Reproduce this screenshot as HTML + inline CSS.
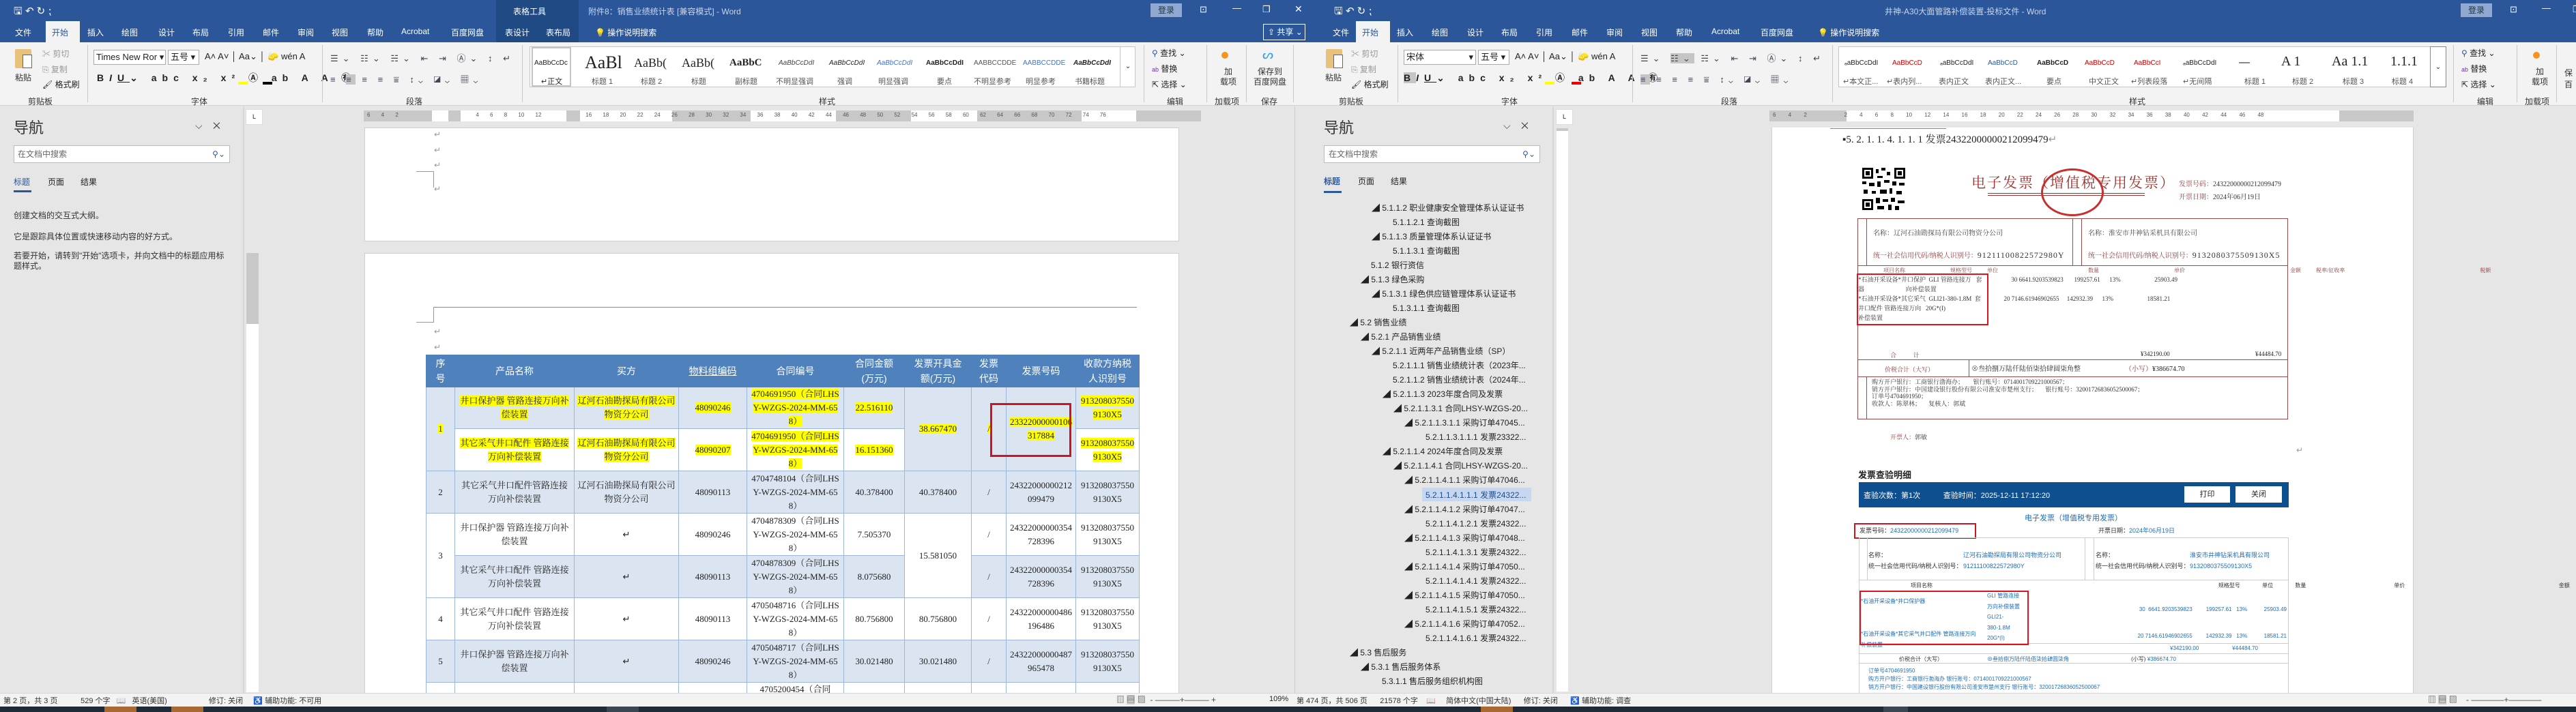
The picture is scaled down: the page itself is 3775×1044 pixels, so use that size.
<!DOCTYPE html>
<html><head><meta charset="utf-8">
<style>
*{margin:0;padding:0;box-sizing:border-box}
body{width:3775px;height:1044px;overflow:hidden;position:relative;background:#e6e6e6;font-family:"Liberation Sans","Noto Sans CJK SC",sans-serif;font-size:12px;color:#222}
.a{position:absolute;white-space:nowrap}
.tb{background:#2b579a}
.w{color:#fff}
.rib{background:#f3f3f3}
.sep{position:absolute;width:1px;background:#c8c8c8}
.gl{font-size:12px;color:#333}
.sty{position:absolute;top:68px;height:60px;width:880px;background:#fff;border:1px solid #c6c6c6}
.sty span{position:absolute;white-space:nowrap}
.nav{font-size:12px;color:#333}
table.t{position:absolute;border-collapse:collapse;table-layout:fixed;font-family:"Liberation Serif","Noto Serif CJK SC",serif;font-size:13px;line-height:20px}
table.t td{border:1px solid #9db7dc;text-align:center;vertical-align:middle;padding:0 4px;overflow:hidden;word-break:break-all}
table.t tr.h td{background:#4f81bd;color:#fff;font-family:"Liberation Sans","Noto Sans CJK SC",sans-serif;font-size:14px;line-height:22px;border-color:#4f81bd}
.b{background:#dbe5f1}
.y{background:#ffff00}
.tree div{position:absolute;white-space:nowrap;font-size:12px;color:#222}
</style></head><body>

<!-- TITLE BAR -->
<div class="a tb" style="left:0;top:0;width:3775px;height:62px"></div>
<div class="a" style="left:727px;top:0;width:121px;height:62px;background:#1f4a84"></div>
<div class="a w" style="left:20px;top:6px;font-size:15px">🖫 ↶ ↻ ⁏</div>
<div class="a w" style="left:752px;top:8px;font-size:12px">表格工具</div>
<div class="a" style="left:862px;top:8px;font-size:12px;color:#c8d4ea">附件8：销售业绩统计表 [兼容模式] - Word</div>
<div class="a" style="left:1686px;top:5px;width:46px;height:20px;background:#8fa9d0;color:#234;font-size:12px;text-align:center;line-height:20px">登录</div>
<div class="a w" style="left:1758px;top:6px;font-size:13px">⊡</div>
<div class="a w" style="left:1806px;top:4px;font-size:13px">—</div>
<div class="a w" style="left:1850px;top:6px;font-size:13px">❐</div>
<div class="a w" style="left:1897px;top:5px;font-size:14px">✕</div>
<div class="a" style="left:67px;top:31px;width:50px;height:31px;background:#f3f3f3"></div>
<div class="a w" style="left:22px;top:39px;font-size:12px">文件</div>
<div class="a" style="left:76px;top:39px;font-size:12px;color:#2b579a">开始</div>
<div class="a w" style="top:39px;left:128px;font-size:12px">插入</div>
<div class="a w" style="top:39px;left:178px;font-size:12px">绘图</div>
<div class="a w" style="top:39px;left:232px;font-size:12px">设计</div>
<div class="a w" style="top:39px;left:282px;font-size:12px">布局</div>
<div class="a w" style="top:39px;left:334px;font-size:12px">引用</div>
<div class="a w" style="top:39px;left:385px;font-size:12px">邮件</div>
<div class="a w" style="top:39px;left:436px;font-size:12px">审阅</div>
<div class="a w" style="top:39px;left:486px;font-size:12px">视图</div>
<div class="a w" style="top:39px;left:538px;font-size:12px">帮助</div>
<div class="a w" style="top:39px;left:588px;font-size:12px">Acrobat</div>
<div class="a w" style="top:39px;left:661px;font-size:12px">百度网盘</div>
<div class="a w" style="top:39px;left:740px;font-size:12px">表设计</div>
<div class="a w" style="top:39px;left:800px;font-size:12px">表布局</div>
<div class="a w" style="top:39px;left:872px;font-size:12px">💡 操作说明搜索</div>
<div class="a w" style="left:1851px;top:35px;width:62px;height:24px;border:1px solid #fff;font-size:12px;line-height:22px;padding-left:6px">⇪ 共享 ⌄</div>
<div class="a w" style="left:1955px;top:6px;font-size:15px">🖫 ↶ ↻ ⁏</div>
<div class="a" style="left:2762px;top:8px;font-size:12px;color:#c8d4ea">井神-A30大面管路补偿装置-投标文件 - Word</div>
<div class="a" style="left:3606px;top:5px;width:46px;height:20px;background:#8fa9d0;color:#234;font-size:12px;text-align:center;line-height:20px">登录</div>
<div class="a w" style="left:3678px;top:6px;font-size:13px">⊡</div>
<div class="a w" style="left:3725px;top:4px;font-size:13px">—</div>
<div class="a w" style="left:3770px;top:6px;font-size:13px">❐</div>
<div class="a" style="left:1987px;top:31px;width:50px;height:31px;background:#f3f3f3"></div>
<div class="a w" style="top:39px;left:1953px;font-size:12px">文件</div>
<div class="a" style="top:39px;left:1996px;font-size:12px;color:#2b579a">开始</div>
<div class="a w" style="top:39px;left:2047px;font-size:12px">插入</div>
<div class="a w" style="top:39px;left:2098px;font-size:12px">绘图</div>
<div class="a w" style="top:39px;left:2150px;font-size:12px">设计</div>
<div class="a w" style="top:39px;left:2200px;font-size:12px">布局</div>
<div class="a w" style="top:39px;left:2251px;font-size:12px">引用</div>
<div class="a w" style="top:39px;left:2303px;font-size:12px">邮件</div>
<div class="a w" style="top:39px;left:2354px;font-size:12px">审阅</div>
<div class="a w" style="top:39px;left:2405px;font-size:12px">视图</div>
<div class="a w" style="top:39px;left:2456px;font-size:12px">帮助</div>
<div class="a w" style="top:39px;left:2508px;font-size:12px">Acrobat</div>
<div class="a w" style="top:39px;left:2580px;font-size:12px">百度网盘</div>
<div class="a w" style="top:39px;left:2664px;font-size:12px">💡 操作说明搜索</div>

<!-- RIBBON LEFT -->
<div class="a rib" style="left:0;top:62px;width:3775px;height:93px;border-bottom:1px solid #d4d4d4"></div>
<div class="a" style="left:22px;top:72px;width:24px;height:28px;background:#e8c27a;border-radius:2px"></div>
<div class="a" style="left:33px;top:80px;width:14px;height:20px;background:#fff;border:1px solid #666"></div>
<div class="a gl" style="left:22px;top:105px">粘贴</div>
<div class="a" style="left:62px;top:70px;color:#999">✂ 剪切</div>
<div class="a" style="left:62px;top:93px;color:#999">⎘ 复制</div>
<div class="a" style="left:62px;top:115px">🖌 格式刷</div>
<div class="a gl" style="left:41px;top:140px">剪贴板</div>
<div class="sep" style="left:128px;top:66px;height:84px"></div>
<div class="a" style="left:137px;top:73px;width:106px;height:22px;background:#fff;border:1px solid #aaa;font-size:13px;line-height:20px;padding-left:3px">Times New Ror ▾</div>
<div class="a" style="left:246px;top:73px;width:46px;height:22px;background:#fff;border:1px solid #aaa;font-size:13px;line-height:20px;padding-left:3px">五号 ▾</div>
<div class="a" style="left:300px;top:75px;font-size:13px">A˄ A˅ │ Aa⌄ │ 🧽 wén A</div>
<div class="a" style="left:142px;top:104px;font-size:14px;font-weight:bold;letter-spacing:8px">B<i>I</i><u>U</u>⌄ abc x₂ x²  Ⓐ ab A A ㊒</div>
<div class="a" style="left:349px;top:120px;width:14px;height:4px;background:#ff0"></div>
<div class="a" style="left:385px;top:120px;width:14px;height:4px;background:#000"></div>
<div class="a gl" style="left:280px;top:140px">字体</div>
<div class="sep" style="left:472px;top:66px;height:84px"></div>
<div class="a" style="left:484px;top:75px;font-size:13px;color:#445;letter-spacing:6px">☰⌄ ☷⌄ ☵⌄ ⇤ ⇥ Ⓐ⌄ ↕ ↵</div>
<div class="a" style="left:484px;top:106px;font-size:13px;color:#445;letter-spacing:6px">≡ <span style="background:#c5c5c5">≡</span> ≡ ≡ ⩸ ↕⌄ ◪⌄ ▦⌄</div>
<div class="a gl" style="left:595px;top:140px">段落</div>
<div class="sep" style="left:765px;top:66px;height:84px"></div>
<div class="sty" style="left:776px;width:888px">
<span style="left:2px;top:0;width:58px;height:58px;border:2px solid #c5c5c5"></span>
<span style="left:6px;top:18px;font-size:10px">AaBbCcDc</span><span style="left:16px;top:42px;font-size:11px">↵正文</span>
<span style="left:80px;top:8px;font-size:26px;font-family:'Liberation Serif',serif">AaBl</span><span style="left:90px;top:42px;font-size:11px;color:#555">标题 1</span>
<span style="left:152px;top:13px;font-size:18px;font-family:'Liberation Serif',serif">AaBb(</span><span style="left:162px;top:42px;font-size:11px;color:#555">标题 2</span>
<span style="left:222px;top:13px;font-size:18px;font-family:'Liberation Serif',serif">AaBb(</span><span style="left:236px;top:42px;font-size:11px;color:#555">标题</span>
<span style="left:292px;top:15px;font-size:15px;font-weight:bold;font-family:'Liberation Serif',serif">AaBbC</span><span style="left:300px;top:42px;font-size:11px;color:#555">副标题</span>
<span style="left:364px;top:18px;font-size:10px;font-style:italic;color:#444">AaBbCcDdI</span><span style="left:360px;top:42px;font-size:11px;color:#555">不明显强调</span>
<span style="left:438px;top:18px;font-size:10px;font-style:italic">AaBbCcDdI</span><span style="left:450px;top:42px;font-size:11px;color:#555">强调</span>
<span style="left:508px;top:18px;font-size:10px;font-style:italic;color:#4472c4">AaBbCcDdI</span><span style="left:510px;top:42px;font-size:11px;color:#555">明显强调</span>
<span style="left:580px;top:18px;font-size:10px;font-weight:bold">AaBbCcDdI</span><span style="left:596px;top:42px;font-size:11px;color:#555">要点</span>
<span style="left:650px;top:18px;font-size:10px;color:#555">AABBCCDDE</span><span style="left:650px;top:42px;font-size:11px;color:#555">不明显参考</span>
<span style="left:722px;top:18px;font-size:10px;color:#4472c4">AABBCCDDE</span><span style="left:726px;top:42px;font-size:11px;color:#555">明显参考</span>
<span style="left:796px;top:18px;font-size:10px;font-style:italic;font-weight:bold">AaBbCcDdI</span><span style="left:798px;top:42px;font-size:11px;color:#555">书籍标题</span>
<span style="left:864px;top:-1px;width:23px;height:60px;border-left:1px solid #c6c6c6;font-size:10px;text-align:center;line-height:60px">⌄</span>
</div>
<div class="a gl" style="left:1200px;top:140px">样式</div>
<div class="sep" style="left:1676px;top:66px;height:84px"></div>
<div class="a" style="left:1688px;top:69px;font-size:12px"><span style="color:#2b579a">⚲</span> 查找 ⌄</div>
<div class="a" style="left:1688px;top:92px;font-size:12px"><span style="color:#7030a0;font-size:9px">ab</span> 替换</div>
<div class="a" style="left:1688px;top:115px;font-size:12px">⇱ 选择 ⌄</div>
<div class="a gl" style="left:1710px;top:140px">编辑</div>
<div class="sep" style="left:1768px;top:66px;height:84px"></div>
<div class="a" style="left:1790px;top:76px;width:10px;height:10px;border-radius:50%;background:#f7941d"></div>
<div class="a gl" style="left:1788px;top:98px;text-align:center;line-height:15px">加<br>载项</div>
<div class="a gl" style="left:1780px;top:140px">加载项</div>
<div class="sep" style="left:1826px;top:66px;height:84px"></div>
<div class="a" style="left:1850px;top:70px;font-size:18px;color:#2a9df4">ᔕ</div>
<div class="a gl" style="left:1837px;top:98px;text-align:center;line-height:15px">保存到<br>百度网盘</div>
<div class="a gl" style="left:1848px;top:140px">保存</div>
<div class="sep" style="left:1895px;top:66px;height:84px"></div>

<!-- RIBBON RIGHT -->
<div class="a" style="left:1943px;top:72px;width:24px;height:28px;background:#e8c27a;border-radius:2px"></div>
<div class="a" style="left:1954px;top:80px;width:14px;height:20px;background:#fff;border:1px solid #666"></div>
<div class="a gl" style="left:1942px;top:105px">粘贴</div>
<div class="a" style="left:1980px;top:70px;color:#999">✂ 剪切</div>
<div class="a" style="left:1980px;top:93px;color:#999">⎘ 复制</div>
<div class="a" style="left:1980px;top:115px">🖌 格式刷</div>
<div class="a gl" style="left:1962px;top:140px">剪贴板</div>
<div class="sep" style="left:2048px;top:66px;height:84px"></div>
<div class="a" style="left:2057px;top:73px;width:106px;height:22px;background:#fff;border:1px solid #aaa;font-size:13px;line-height:20px;padding-left:3px">宋体<span style="float:right;padding-right:3px">▾</span></div>
<div class="a" style="left:2166px;top:73px;width:46px;height:22px;background:#fff;border:1px solid #aaa;font-size:13px;line-height:20px;padding-left:3px">五号 ▾</div>
<div class="a" style="left:2220px;top:75px;font-size:13px">A˄ A˅ │ Aa⌄ │ 🧽 wén A</div>
<div class="a" style="left:2057px;top:104px;font-size:14px;font-weight:bold;letter-spacing:8px"><span style="background:#c5c5c5">B</span><i>I</i><u>U</u>⌄ abc x₂ x² Ⓐ ab A A ㊒</div>
<div class="a" style="left:2264px;top:120px;width:14px;height:4px;background:#ff0"></div>
<div class="a" style="left:2303px;top:120px;width:14px;height:4px;background:#e00"></div>
<div class="a gl" style="left:2200px;top:140px">字体</div>
<div class="sep" style="left:2392px;top:66px;height:84px"></div>
<div class="a" style="left:2404px;top:75px;font-size:13px;color:#445;letter-spacing:6px">☰⌄ <span style="background:#c5c5c5">☷⌄</span> ☵⌄ ⇤ ⇥ Ⓐ⌄ ↕ ↵</div>
<div class="a" style="left:2404px;top:106px;font-size:13px;color:#445;letter-spacing:6px"><span style="background:#c5c5c5">≡</span> ≡ ≡ ≡ ⩸ ↕⌄ ◪⌄ ▦⌄</div>
<div class="a gl" style="left:2522px;top:140px">段落</div>
<div class="sep" style="left:2685px;top:66px;height:84px"></div>
<div class="sty" style="left:2694px;width:891px">
<span style="left:8px;top:18px;font-size:10px">ₐaBbCcDdI</span><span style="left:6px;top:42px;font-size:11px;color:#555">↵本文正...</span>
<span style="left:78px;top:18px;font-size:10px;color:#c00">AaBbCcD</span><span style="left:70px;top:42px;font-size:11px;color:#555">↵表内列...</span>
<span style="left:148px;top:18px;font-size:10px">ₐaBbCcDdI</span><span style="left:146px;top:42px;font-size:11px;color:#555">表内正文</span>
<span style="left:218px;top:18px;font-size:10px;color:#2b579a">AaBbCcD</span><span style="left:214px;top:42px;font-size:11px;color:#555">表内正文...</span>
<span style="left:290px;top:18px;font-size:10px;font-weight:bold">AaBbCcD</span><span style="left:304px;top:42px;font-size:11px;color:#555">要点</span>
<span style="left:360px;top:18px;font-size:10px;color:#c00">AaBbCcD</span><span style="left:366px;top:42px;font-size:11px;color:#555">中文正文</span>
<span style="left:432px;top:18px;font-size:10px;color:#c00">AaBbCcI</span><span style="left:428px;top:42px;font-size:11px;color:#555">↵列表段落</span>
<span style="left:504px;top:18px;font-size:10px">ₐaBbCcDdI</span><span style="left:504px;top:42px;font-size:11px;color:#555">↵无间隔</span>
<span style="left:586px;top:14px;font-size:16px">—</span><span style="left:594px;top:42px;font-size:11px;color:#555">标题 1</span>
<span style="left:648px;top:10px;font-size:20px;font-family:'Liberation Serif',serif">A 1</span><span style="left:664px;top:42px;font-size:11px;color:#555">标题 2</span>
<span style="left:722px;top:10px;font-size:20px;font-family:'Liberation Serif',serif">Aa 1.1</span><span style="left:738px;top:42px;font-size:11px;color:#555">标题 3</span>
<span style="left:808px;top:10px;font-size:20px;font-family:'Liberation Serif',serif">1.1.1</span><span style="left:810px;top:42px;font-size:11px;color:#555">标题 4</span>
</div>
<div class="a" style="left:3561px;top:68px;width:24px;height:60px;border:1px solid #888;background:#fff;font-size:10px;text-align:center;line-height:60px">⌄</div>
<div class="a gl" style="left:3120px;top:140px">样式</div>
<div class="sep" style="left:3595px;top:66px;height:84px"></div>
<div class="a" style="left:3607px;top:69px;font-size:12px"><span style="color:#2b579a">⚲</span> 查找 ⌄</div>
<div class="a" style="left:3607px;top:92px;font-size:12px"><span style="color:#7030a0;font-size:9px">ab</span> 替换</div>
<div class="a" style="left:3607px;top:115px;font-size:12px">⇱ 选择 ⌄</div>
<div class="a gl" style="left:3630px;top:140px">编辑</div>
<div class="sep" style="left:3688px;top:66px;height:84px"></div>
<div class="a" style="left:3712px;top:76px;width:10px;height:10px;border-radius:50%;background:#f7941d"></div>
<div class="a gl" style="left:3710px;top:98px;text-align:center;line-height:15px">加<br>载项</div>
<div class="a gl" style="left:3700px;top:140px">加载项</div>
<div class="sep" style="left:3746px;top:66px;height:84px"></div>
<div class="a gl" style="left:3758px;top:98px">保<br>百</div>

<!-- LEFT WINDOW BODY -->
<div class="a" style="left:356px;top:156px;width:2px;height:860px;background:#d6d6d6"></div>
<div class="a" style="left:20px;top:170px;font-size:22px;color:#333">导航</div>
<div class="a" style="left:286px;top:176px;font-size:14px;color:#444">⌵ &nbsp;&nbsp; ✕</div>
<div class="a" style="left:20px;top:213px;width:317px;height:26px;background:#fff;border:1px solid #bbb;font-size:12px;line-height:24px;padding-left:5px;color:#666">在文档中搜索<span style="position:absolute;right:6px;color:#2b579a">⚲⌄</span></div>
<div class="a" style="left:20px;top:258px;font-size:12px;color:#2b579a">标题</div>
<div class="a" style="left:70px;top:258px;font-size:12px">页面</div>
<div class="a" style="left:118px;top:258px;font-size:12px">结果</div>
<div class="a" style="left:20px;top:279px;width:26px;height:3px;background:#2b579a"></div>
<div class="a nav" style="left:20px;top:307px">创建文档的交互式大纲。</div>
<div class="a nav" style="left:20px;top:338px">它是跟踪具体位置或快速移动内容的好方式。</div>
<div class="a nav" style="left:20px;top:368px;line-height:15px">若要开始，请转到"开始"选项卡，并向文档中的标题应用标<br>题样式。</div>
<div class="a" style="left:360px;top:160px;width:25px;height:23px;background:#fff;border:1px solid #ddd;font-size:9px;text-align:center;line-height:20px">L</div>
<div class="a" style="left:533px;top:162px;width:1227px;height:16px;background:#c8c8c8"></div>
<div class="a" style="left:633px;top:162px;width:24px;height:16px;background:#fff"></div>
<div class="a" style="left:675px;top:162px;width:155px;height:16px;background:#fff"></div>
<div class="a" style="left:850px;top:162px;width:135px;height:16px;background:#fff"></div>
<div class="a" style="left:1100px;top:162px;width:125px;height:16px;background:#fff"></div>
<div class="a" style="left:1335px;top:162px;width:97px;height:16px;background:#fff"></div>
<div class="a" style="left:1585px;top:162px;width:80px;height:16px;background:#fff"></div>
<div class="a" style="left:538px;top:164px;font-size:8px;color:#555;word-spacing:14px">6 4 2 &nbsp;&nbsp;&nbsp;&nbsp;&nbsp; 4 6 8 10 12 &nbsp;&nbsp; 16 18 20 22 24 26 28 30 32 34 36 38 40 42 44 46 48 50 52 54 56 58 60 62 64 66 68 70 72 74 76</div>
<div class="a" style="left:361px;top:371px;width:18px;height:104px;background:#c8c8c8"></div>
<div class="a" style="left:361px;top:475px;width:18px;height:540px;background:#fff"></div>
<div class="a" style="left:534px;top:187px;width:1194px;height:167px;background:#fff;border:1px solid #cfcfcf"></div>
<div class="a" style="left:636px;top:190px;color:#999">↵</div>
<div class="a" style="left:636px;top:213px;color:#999">↵</div>
<div class="a" style="left:636px;top:235px;color:#999">↵</div>
<div class="a" style="left:610px;top:251px;width:26px;height:24px;border-top:1px solid #999;border-right:1px solid #999"></div>
<div class="a" style="left:636px;top:270px;color:#999">↵</div>
<div class="a" style="left:534px;top:371px;width:1194px;height:660px;background:#fff;border:1px solid #cfcfcf"></div>
<div class="a" style="left:636px;top:450px;width:1030px;height:1px;background:#888"></div>
<div class="a" style="left:610px;top:450px;width:26px;height:23px;border-bottom:1px solid #999;border-right:1px solid #999"></div>
<div class="a" style="left:636px;top:479px;color:#999">↵</div>
<div class="a" style="left:636px;top:502px;color:#999">↵</div>

<table class="t" style="left:624px;top:520px;width:1045px">
<colgroup><col style="width:42px"><col style="width:175px"><col style="width:153px"><col style="width:100px"><col style="width:142px"><col style="width:89px"><col style="width:98px"><col style="width:51px"><col style="width:102px"><col style="width:93px"></colgroup>
<tr class="h" style="height:47px"><td>序<br>号</td><td>产品名称</td><td>买方</td><td><u>物料组编码</u></td><td>合同编号</td><td>合同金额<br>(万元)</td><td>发票开具金<br>额(万元)</td><td>发票<br>代码</td><td>发票号码</td><td>收款方纳税<br>人识别号</td></tr>
<tr class="b" style="height:61px"><td rowspan="2"><span class="y">1</span></td><td><span class="y">井口保护器 管路连接万向补偿装置</span></td><td><span class="y">辽河石油勘探局有限公司物资分公司</span></td><td><span class="y">48090246</span></td><td><span class="y">4704691950（合同LHSY-WZGS-2024-MM-658）</span></td><td><span class="y">22.516110</span></td><td rowspan="2"><span class="y">38.667470</span></td><td rowspan="2"><span class="y">/</span></td><td rowspan="2"><span class="y">23322000000106317884</span></td><td><span class="y">9132080375509130X5</span></td></tr>
<tr style="height:62px;background:#fff"><td><span class="y">其它采气井口配件 管路连接万向补偿装置</span></td><td><span class="y">辽河石油勘探局有限公司物资分公司</span></td><td><span class="y">48090207</span></td><td><span class="y">4704691950（合同LHSY-WZGS-2024-MM-658）</span></td><td><span class="y">16.151360</span></td><td><span class="y">9132080375509130X5</span></td></tr>
<tr class="b" style="height:62px"><td>2</td><td>其它采气井口配件管路连接万向补偿装置</td><td>辽河石油勘探局有限公司物资分公司</td><td>48090113</td><td>4704748104（合同LHSY-WZGS-2024-MM-658）</td><td>40.378400</td><td>40.378400</td><td>/</td><td>24322000000212099479</td><td>9132080375509130X5</td></tr>
<tr style="height:62px;background:#fff"><td rowspan="2">3</td><td>井口保护器 管路连接万向补偿装置</td><td>↵</td><td>48090246</td><td>4704878309（合同LHSY-WZGS-2024-MM-658）</td><td>7.505370</td><td rowspan="2">15.581050</td><td>/</td><td>24322000000354728396</td><td>9132080375509130X5</td></tr>
<tr class="b" style="height:62px"><td>其它采气井口配件 管路连接万向补偿装置</td><td>↵</td><td>48090113</td><td>4704878309（合同LHSY-WZGS-2024-MM-658）</td><td>8.075680</td><td>/</td><td>24322000000354728396</td><td>9132080375509130X5</td></tr>
<tr style="height:62px;background:#fff"><td>4</td><td>其它采气井口配件 管路连接万向补偿装置</td><td>↵</td><td>48090113</td><td>4705048716（合同LHSY-WZGS-2024-MM-658）</td><td>80.756800</td><td>80.756800</td><td>/</td><td>24322000000486196486</td><td>9132080375509130X5</td></tr>
<tr class="b" style="height:62px"><td>5</td><td>井口保护器 管路连接万向补偿装置</td><td>↵</td><td>48090246</td><td>4705048717（合同LHSY-WZGS-2024-MM-658）</td><td>30.021480</td><td>30.021480</td><td>/</td><td>24322000000487965478</td><td>9132080375509130X5</td></tr>
<tr style="height:40px;background:#fff"><td></td><td></td><td></td><td></td><td style="vertical-align:top">4705200454（合同</td><td></td><td></td><td></td><td></td><td></td></tr>
</table>
<div class="a" style="left:1451px;top:591px;width:119px;height:79px;border:3px solid #d0141e"></div>

<!-- RIGHT WINDOW BODY -->
<div class="a" style="left:1897px;top:156px;width:1px;height:860px;background:#ccc"></div>
<div class="a" style="left:2275px;top:156px;width:2px;height:860px;background:#d6d6d6"></div>
<div class="a" style="left:1940px;top:170px;font-size:22px;color:#333">导航</div>
<div class="a" style="left:2203px;top:176px;font-size:14px;color:#444">⌵ &nbsp;&nbsp; ✕</div>
<div class="a" style="left:1940px;top:213px;width:317px;height:26px;background:#fff;border:1px solid #bbb;font-size:12px;line-height:24px;padding-left:6px;color:#666">在文档中搜索<span style="position:absolute;right:6px;color:#2b579a">⚲⌄</span></div>
<div class="a" style="left:1940px;top:257px;font-size:12px;color:#2b579a;font-weight:bold">标题</div>
<div class="a" style="left:1990px;top:257px;font-size:12px">页面</div>
<div class="a" style="left:2038px;top:257px;font-size:12px">结果</div>
<div class="a" style="left:1940px;top:280px;width:26px;height:3px;background:#2b579a"></div>
<div class="a" style="left:2084px;top:715px;width:160px;height:20px;background:#c5d7f1"></div>
<div class="tree">
<div style="left:2010px;top:296px">◢ 5.1.1.2 职业健康安全管理体系认证证书</div>
<div style="left:2041px;top:317px">5.1.1.2.1 查询截图</div>
<div style="left:2010px;top:338px">◢ 5.1.1.3 质量管理体系认证证书</div>
<div style="left:2041px;top:359px">5.1.1.3.1 查询截图</div>
<div style="left:2009px;top:380px">5.1.2 银行资信</div>
<div style="left:1994px;top:401px">◢ 5.1.3 绿色采购</div>
<div style="left:2010px;top:422px">◢ 5.1.3.1 绿色供应链管理体系认证证书</div>
<div style="left:2041px;top:443px">5.1.3.1.1 查询截图</div>
<div style="left:1978px;top:464px">◢ 5.2 销售业绩</div>
<div style="left:1994px;top:485px">◢ 5.2.1 产品销售业绩</div>
<div style="left:2010px;top:506px">◢ 5.2.1.1 近两年产品销售业绩（SP）</div>
<div style="left:2041px;top:527px">5.2.1.1.1 销售业绩统计表（2023年...</div>
<div style="left:2041px;top:548px">5.2.1.1.2 销售业绩统计表（2024年...</div>
<div style="left:2026px;top:569px">◢ 5.2.1.1.3 2023年度合同及发票</div>
<div style="left:2042px;top:590px">◢ 5.2.1.1.3.1 合同LHSY-WZGS-20...</div>
<div style="left:2058px;top:611px">◢ 5.2.1.1.3.1.1 采购订单47045...</div>
<div style="left:2089px;top:632px">5.2.1.1.3.1.1.1 发票23322...</div>
<div style="left:2026px;top:653px">◢ 5.2.1.1.4 2024年度合同及发票</div>
<div style="left:2042px;top:674px">◢ 5.2.1.1.4.1 合同LHSY-WZGS-20...</div>
<div style="left:2058px;top:695px">◢ 5.2.1.1.4.1.1 采购订单47046...</div>
<div style="left:2089px;top:717px;color:#1f4e8c">5.2.1.1.4.1.1.1 发票24322...</div>
<div style="left:2058px;top:738px">◢ 5.2.1.1.4.1.2 采购订单47047...</div>
<div style="left:2089px;top:759px">5.2.1.1.4.1.2.1 发票24322...</div>
<div style="left:2058px;top:780px">◢ 5.2.1.1.4.1.3 采购订单47048...</div>
<div style="left:2089px;top:801px">5.2.1.1.4.1.3.1 发票24322...</div>
<div style="left:2058px;top:822px">◢ 5.2.1.1.4.1.4 采购订单47050...</div>
<div style="left:2089px;top:843px">5.2.1.1.4.1.4.1 发票24322...</div>
<div style="left:2058px;top:864px">◢ 5.2.1.1.4.1.5 采购订单47050...</div>
<div style="left:2089px;top:885px">5.2.1.1.4.1.5.1 发票24322...</div>
<div style="left:2058px;top:906px">◢ 5.2.1.1.4.1.6 采购订单47052...</div>
<div style="left:2089px;top:927px">5.2.1.1.4.1.6.1 发票24322...</div>
<div style="left:1978px;top:948px">◢ 5.3 售后服务</div>
<div style="left:1994px;top:969px">◢ 5.3.1 售后服务体系</div>
<div style="left:2025px;top:990px">5.3.1.1 售后服务组织机构图</div>
</div>
<div class="a" style="left:2280px;top:160px;width:25px;height:23px;background:#fff;border:1px solid #ddd;font-size:9px;text-align:center;line-height:20px">L</div>
<div class="a" style="left:2281px;top:188px;width:17px;height:826px;background:#fff"></div>
<div class="a" style="left:2281px;top:188px;width:17px;height:4px;background:#c8c8c8"></div>
<div class="a" style="left:2593px;top:162px;width:944px;height:16px;background:#c8c8c8"></div>
<div class="a" style="left:2706px;top:162px;width:722px;height:16px;background:#fff"></div>
<div class="a" style="left:2598px;top:164px;font-size:8px;color:#555;word-spacing:16px">6 4 2 &nbsp; 2 4 6 8 10 12 14 16 18 20 22 24 26 28 30 32 34 36 38 40 42 44 46 48</div>
<div class="a" style="left:2596px;top:187px;width:941px;height:829px;background:#fff;border-left:1px solid #cfcfcf;border-right:1px solid #cfcfcf"></div>
<div class="a" style="left:2682px;top:188px;width:170px;height:1px;background:#888"></div>
<div class="a" style="left:2700px;top:193px;font-family:'Liberation Serif','Noto Serif CJK SC',serif;font-size:15px">▪5. 2. 1. 1. 4. 1. 1. 1 发票24322000000212099479<span style="color:#999">↵</span></div>
<svg class="a" style="left:2729px;top:246px" width="63" height="62" viewBox="0 0 63 62">
<rect width="63" height="62" fill="#fff"/>
<g fill="#000"><rect x="0" y="0" width="16" height="16"/><rect x="47" y="0" width="16" height="16"/><rect x="0" y="46" width="16" height="16"/></g>
<g fill="#fff"><rect x="3" y="3" width="10" height="10"/><rect x="50" y="3" width="10" height="10"/><rect x="3" y="49" width="10" height="10"/></g>
<g fill="#000"><rect x="5" y="5" width="6" height="6"/><rect x="52" y="5" width="6" height="6"/><rect x="5" y="51" width="6" height="6"/>
<rect x="20" y="2" width="4" height="6"/><rect x="28" y="0" width="6" height="4"/><rect x="36" y="6" width="5" height="5"/><rect x="22" y="12" width="8" height="3"/><rect x="0" y="20" width="6" height="4"/><rect x="10" y="22" width="8" height="5"/><rect x="22" y="20" width="5" height="8"/><rect x="32" y="18" width="8" height="4"/><rect x="44" y="20" width="6" height="6"/><rect x="54" y="22" width="8" height="4"/><rect x="2" y="32" width="6" height="6"/><rect x="14" y="34" width="6" height="4"/><rect x="26" y="32" width="10" height="6"/><rect x="40" y="30" width="4" height="8"/><rect x="50" y="34" width="8" height="5"/><rect x="20" y="44" width="6" height="8"/><rect x="30" y="46" width="8" height="4"/><rect x="42" y="44" width="6" height="6"/><rect x="52" y="48" width="10" height="4"/><rect x="22" y="56" width="10" height="5"/><rect x="38" y="54" width="5" height="8"/><rect x="48" y="56" width="6" height="6"/></g>
</svg>
<div class="a" style="left:2889px;top:252px;font-family:'Liberation Serif','Noto Serif CJK SC',serif;font-size:21px;color:#a0302c;letter-spacing:2px">电子发票（增值税专用发票）</div>
<div class="a" style="left:2913px;top:283px;width:230px;height:4px;border-top:1px solid #a0302c;border-bottom:1px solid #a0302c"></div>
<div class="a" style="left:2991px;top:247px;width:92px;height:70px;border:3px solid #c8302e;border-radius:50%"></div>
<div class="a" style="left:3193px;top:261px;font-family:'Liberation Serif','Noto Serif CJK SC',serif;font-size:10px;color:#8a3a3a">发票号码：<span style="color:#333">24322000000212099479</span></div>
<div class="a" style="left:3193px;top:280px;font-family:'Liberation Serif','Noto Serif CJK SC',serif;font-size:10px;color:#8a3a3a">开票日期：<span style="color:#333">2024年06月19日</span></div>
<div class="a" style="left:2722px;top:320px;width:631px;height:295px;border:1.5px solid #9a4a4a"></div>
<div class="a" style="left:2722px;top:389px;width:631px;height:1px;background:#9a4a4a"></div>
<div class="a" style="left:2722px;top:527px;width:631px;height:1px;background:#9a4a4a"></div>
<div class="a" style="left:2722px;top:552px;width:631px;height:1px;background:#9a4a4a"></div>
<div class="a" style="left:2735px;top:320px;width:1px;height:69px;background:#9a4a4a"></div>
<div class="a" style="left:3037px;top:320px;width:1px;height:69px;background:#9a4a4a"></div>
<div class="a" style="left:3050px;top:320px;width:1px;height:69px;background:#9a4a4a"></div>
<div class="a" style="left:2885px;top:527px;width:1px;height:25px;background:#9a4a4a"></div>
<div class="a" style="left:2735px;top:552px;width:1px;height:63px;background:#9a4a4a"></div>
<div class="a" style="left:2745px;top:333px;font-family:'Liberation Serif','Noto Serif CJK SC',serif;font-size:10px;color:#444">名称：辽河石油勘探局有限公司物资分公司</div>
<div class="a" style="left:2745px;top:366px;font-family:'Liberation Serif','Noto Serif CJK SC',serif;font-size:10px;color:#8a3a3a">统一社会信用代码/纳税人识别号：<span style="color:#333;font-size:12px;letter-spacing:1px">91211100822572980Y</span></div>
<div class="a" style="left:3060px;top:333px;font-family:'Liberation Serif','Noto Serif CJK SC',serif;font-size:10px;color:#444">名称：淮安市井神钻采机具有限公司</div>
<div class="a" style="left:3060px;top:366px;font-family:'Liberation Serif','Noto Serif CJK SC',serif;font-size:10px;color:#8a3a3a">统一社会信用代码/纳税人识别号：<span style="color:#333;font-size:12px;letter-spacing:1px">9132080375509130X5</span></div>
<div class="a" style="left:2760px;top:391px;font-family:'Liberation Serif','Noto Serif CJK SC',serif;font-size:8px;color:#8a3a3a;word-spacing:20px">项目名称 &nbsp; 规格型号 单位 &nbsp;&nbsp;&nbsp;&nbsp; 数量 &nbsp;&nbsp;&nbsp; 单价 &nbsp;&nbsp;&nbsp;&nbsp;&nbsp; 金额 税率/征收率 &nbsp;&nbsp;&nbsp;&nbsp;&nbsp;&nbsp;&nbsp; 税额</div>
<div class="a" style="left:2723px;top:403px;font-family:'Liberation Serif','Noto Serif CJK SC',serif;font-size:9px;line-height:14px;color:#333">*石油开采设备*井口保护 &nbsp;GLI 管路连接万 &nbsp;&nbsp;套 &nbsp;&nbsp;&nbsp;&nbsp;&nbsp;&nbsp;&nbsp;&nbsp;&nbsp;&nbsp;&nbsp;&nbsp;&nbsp;&nbsp;&nbsp;&nbsp;&nbsp;&nbsp;30 6641.9203539823 &nbsp;&nbsp;&nbsp;&nbsp;&nbsp;&nbsp;199257.61 &nbsp;&nbsp;&nbsp;&nbsp;&nbsp;13% &nbsp;&nbsp;&nbsp;&nbsp;&nbsp;&nbsp;&nbsp;&nbsp;&nbsp;&nbsp;&nbsp;&nbsp;&nbsp;&nbsp;&nbsp;&nbsp;&nbsp;&nbsp;&nbsp;&nbsp;&nbsp;25903.49<br>器 &nbsp;&nbsp;&nbsp;&nbsp;&nbsp;&nbsp;&nbsp;&nbsp;&nbsp;&nbsp;&nbsp;&nbsp;&nbsp;&nbsp;&nbsp;&nbsp;&nbsp;&nbsp;&nbsp;&nbsp;&nbsp;&nbsp;&nbsp;&nbsp;&nbsp;&nbsp;向补偿装置<br>*石油开采设备*其它采气 &nbsp;GLI21-380-1.8M &nbsp;套 &nbsp;&nbsp;&nbsp;&nbsp;&nbsp;&nbsp;&nbsp;&nbsp;&nbsp;&nbsp;&nbsp;&nbsp;&nbsp;&nbsp;20 7146.61946902655 &nbsp;&nbsp;&nbsp;&nbsp;142932.39 &nbsp;&nbsp;&nbsp;&nbsp;&nbsp;13% &nbsp;&nbsp;&nbsp;&nbsp;&nbsp;&nbsp;&nbsp;&nbsp;&nbsp;&nbsp;&nbsp;&nbsp;&nbsp;&nbsp;&nbsp;&nbsp;&nbsp;&nbsp;&nbsp;&nbsp;&nbsp;18581.21<br>井口配件 管路连接万向 &nbsp;&nbsp;20G*(I)<br>补偿装置</div>
<div class="a" style="left:2721px;top:401px;width:193px;height:76px;border:2px solid #e0141e"></div>
<div class="a" style="left:2770px;top:514px;font-family:'Liberation Serif','Noto Serif CJK SC',serif;font-size:9px;color:#8a3a3a">合 &nbsp;&nbsp;&nbsp;&nbsp;&nbsp;&nbsp;&nbsp;&nbsp;&nbsp; 计</div>
<div class="a" style="left:3137px;top:514px;font-family:'Liberation Serif',serif;font-size:9px">¥342190.00</div>
<div class="a" style="left:3305px;top:514px;font-family:'Liberation Serif',serif;font-size:9px">¥44484.70</div>
<div class="a" style="left:2762px;top:535px;font-family:'Liberation Serif','Noto Serif CJK SC',serif;font-size:9px;color:#8a3a3a">价税合计（大写）</div>
<div class="a" style="left:2889px;top:532px;font-family:'Liberation Serif','Noto Serif CJK SC',serif;font-size:10px">⊗叁拾捌万陆仟陆佰柒拾肆圆柒角整 &nbsp;&nbsp;&nbsp;&nbsp;&nbsp;&nbsp;&nbsp;&nbsp;&nbsp;&nbsp;&nbsp;&nbsp;&nbsp;&nbsp;&nbsp;&nbsp;&nbsp;&nbsp;&nbsp;&nbsp;&nbsp;&nbsp;&nbsp;&nbsp;&nbsp;<span style="color:#8a3a3a">（小写）</span>¥386674.70</div>
<div class="a" style="left:2743px;top:555px;font-family:'Liberation Serif','Noto Serif CJK SC',serif;font-size:9px;line-height:10.5px;color:#333">购方开户银行：工商银行渤海办； &nbsp;&nbsp;&nbsp;&nbsp;&nbsp;银行账号：0714001709221000567；<br>销方开户银行：中国建设银行股份有限公司淮安市楚州支行； &nbsp;&nbsp;&nbsp;&nbsp;银行账号：32001726836052500067；<br>订单号4704691950；<br>收款人：陈翠林； &nbsp;&nbsp;&nbsp;&nbsp;复核人：郭斌</div>
<div class="a" style="left:2770px;top:634px;font-family:'Liberation Serif','Noto Serif CJK SC',serif;font-size:9px;color:#8a3a3a">开票人：<span style="color:#333">郭敏</span></div>
<div class="a" style="left:3365px;top:653px;color:#999">↵</div>
<div class="a" style="left:2723px;top:686px;font-size:13px;font-weight:bold;color:#222">发票查验明细</div>
<div class="a" style="left:2724px;top:707px;width:630px;height:37px;background:#0d4f8f"></div>
<div class="a w" style="left:2731px;top:718px;font-size:11px">查验次数：第1次 &nbsp;&nbsp;&nbsp;&nbsp;&nbsp;&nbsp;&nbsp;&nbsp;&nbsp; 查验时间：2025-12-11 17:12:20</div>
<div class="a" style="left:3201px;top:713px;width:67px;height:24px;background:#fff;font-size:11px;text-align:center;line-height:24px">打印</div>
<div class="a" style="left:3276px;top:713px;width:68px;height:24px;background:#fff;font-size:11px;text-align:center;line-height:24px">关闭</div>
<div class="a" style="left:2967px;top:751px;font-size:11px;color:#1f6db5">电子发票（增值税专用发票）</div>
<div class="a" style="left:2725px;top:771px;font-size:9px;color:#333">发票号码：<span style="color:#1f6db5">24322000000212099479</span></div>
<div class="a" style="left:3075px;top:771px;font-size:9px;color:#333">开票日期：<span style="color:#1f6db5">2024年06月19日</span></div>
<div class="a" style="left:2717px;top:767px;width:179px;height:23px;border:2.5px solid #d0141e"></div>
<div class="a" style="left:2724px;top:788px;width:630px;height:230px;border:1px solid #ccc"></div>
<div class="a" style="left:2724px;top:850px;width:630px;height:1px;background:#ccc"></div>
<div class="a" style="left:2724px;top:943px;width:630px;height:1px;background:#ccc"></div>
<div class="a" style="left:2724px;top:958px;width:630px;height:1px;background:#ccc"></div>
<div class="a" style="left:2724px;top:972px;width:630px;height:1px;background:#ccc"></div>
<div class="a" style="left:2736px;top:788px;width:1px;height:62px;background:#ccc"></div>
<div class="a" style="left:3055px;top:788px;width:1px;height:62px;background:#ccc"></div>
<div class="a" style="left:3068px;top:788px;width:1px;height:62px;background:#ccc"></div>
<div class="a" style="left:2738px;top:806px;font-size:9px;line-height:16px;color:#333">名称：<br>统一社会信用代码/纳税人识别号：</div>
<div class="a" style="left:2877px;top:806px;font-size:9px;line-height:16px;color:#1f6db5">辽河石油勘探局有限公司物资分公司<br>91211100822572980Y</div>
<div class="a" style="left:3071px;top:806px;font-size:9px;line-height:16px;color:#333">名称：<br>统一社会信用代码/纳税人识别号：</div>
<div class="a" style="left:3209px;top:806px;font-size:9px;line-height:16px;color:#1f6db5">淮安市井神钻采机具有限公司<br>9132080375509130X5</div>
<div class="a" style="left:2800px;top:853px;font-size:8px;color:#333;word-spacing:30px">项目名称 &nbsp;&nbsp;&nbsp;&nbsp;&nbsp;&nbsp;&nbsp;&nbsp;&nbsp;&nbsp;&nbsp; 规格型号 单位 数量 &nbsp;&nbsp; 单价 &nbsp;&nbsp;&nbsp;&nbsp;&nbsp; 金额 税率 &nbsp;&nbsp; 税额</div>
<div class="a" style="left:2727px;top:874px;font-size:8px;line-height:16px;color:#1f6db5">*石油开采设备*井口保护器<br><br><br>*石油开采设备*其它采气井口配件 管路连接万向<br>补偿装置</div>
<div class="a" style="left:2912px;top:866px;font-size:8px;line-height:15.5px;color:#1f6db5">GLI 管路连接<br>万向补偿装置<br>GLI21-<br>380-1.8M<br>20G*(I)</div>
<div class="a" style="left:3046px;top:874px;font-size:8px;line-height:39px;color:#1f6db5;text-align:right;width:305px">30 &nbsp;6641.9203539823 &nbsp;&nbsp;&nbsp;&nbsp;&nbsp;&nbsp;&nbsp; 199257.61 &nbsp; 13% &nbsp;&nbsp;&nbsp;&nbsp;&nbsp;&nbsp;&nbsp;&nbsp;&nbsp; 25903.49<br>20 7146.61946902655 &nbsp;&nbsp;&nbsp;&nbsp;&nbsp;&nbsp;&nbsp; 142932.39 &nbsp; 13% &nbsp;&nbsp;&nbsp;&nbsp;&nbsp;&nbsp;&nbsp;&nbsp;&nbsp; 18581.21</div>
<div class="a" style="left:2725px;top:866px;width:248px;height:80px;border:2px solid #e0141e"></div>
<div class="a" style="left:3180px;top:946px;font-size:8px;color:#1f6db5">¥342190.00 &nbsp;&nbsp;&nbsp;&nbsp;&nbsp;&nbsp;&nbsp;&nbsp;&nbsp;&nbsp;&nbsp;&nbsp;&nbsp;&nbsp;&nbsp;&nbsp;&nbsp;&nbsp;&nbsp;&nbsp; ¥44484.70</div>
<div class="a" style="left:2783px;top:961px;font-size:8px;color:#333">价税合计（大写）</div>
<div class="a" style="left:2912px;top:961px;font-size:8px;color:#1f6db5">⊗叁拾捌万陆仟陆佰柒拾肆圆柒角 &nbsp;&nbsp;&nbsp;&nbsp;&nbsp;&nbsp;&nbsp;&nbsp;&nbsp;&nbsp;&nbsp;&nbsp;&nbsp;&nbsp;&nbsp;&nbsp;&nbsp;&nbsp;&nbsp;&nbsp;&nbsp;&nbsp;&nbsp;&nbsp;&nbsp;&nbsp;&nbsp;&nbsp;&nbsp;&nbsp;&nbsp;&nbsp;&nbsp;&nbsp;&nbsp;&nbsp;&nbsp;&nbsp;&nbsp; <span style="color:#333">(小写)</span> ¥386674.70</div>
<div class="a" style="left:2738px;top:978px;font-size:8px;line-height:12px;color:#1f6db5">订单号4704691950<br>购方开户银行：工商银行渤海办 银行账号：0714001709221000567<br>销方开户银行：中国建设银行股份有限公司淮安市楚州支行 银行账号：32001726836052500067</div>

<!-- STATUS BARS -->
<div class="a" style="left:0;top:1016px;width:3775px;height:20px;background:#f3f3f3;border-top:1px solid #d6d6d6"></div>
<div class="a" style="left:5px;top:1019px;font-size:11px;color:#333">第 2 页，共 3 页 &nbsp;&nbsp;&nbsp;&nbsp;&nbsp;&nbsp;&nbsp;&nbsp;&nbsp; 529 个字 &nbsp;&nbsp;📖 &nbsp;&nbsp;英语(美国) &nbsp;&nbsp;&nbsp;&nbsp;&nbsp;&nbsp;&nbsp;&nbsp;&nbsp;&nbsp;&nbsp;&nbsp;&nbsp;&nbsp;&nbsp;&nbsp;&nbsp;&nbsp; 修订: 关闭 &nbsp;&nbsp;&nbsp; ♿ 辅助功能: 不可用</div>
<div class="a" style="left:1636px;top:1017px;font-size:12px;color:#444">▥ <span style="background:#d0d0d0">▤</span> ▧ &nbsp;- ———+——— +</div>
<div class="a" style="left:1860px;top:1019px;font-size:11px">109%</div>
<div class="a" style="left:1900px;top:1019px;font-size:11px;color:#333">第 474 页，共 506 页 &nbsp;&nbsp;&nbsp;&nbsp; 21578 个字 &nbsp;&nbsp; 📖 &nbsp;&nbsp;&nbsp; 简体中文(中国大陆) &nbsp;&nbsp;&nbsp;&nbsp; 修订: 关闭 &nbsp;&nbsp;&nbsp;&nbsp; ♿ 辅助功能: 调查</div>
<div class="a" style="left:3558px;top:1017px;font-size:12px;color:#444">▥ <span style="background:#d0d0d0">▤</span> ▧ &nbsp;&nbsp; - ————+————</div>
<div class="a" style="left:0;top:1036px;width:3775px;height:8px;background:#1e2a36"></div>
<div class="a" style="left:153px;top:1036px;width:47px;height:8px;background:#a86a32"></div>
<div class="a" style="left:251px;top:1036px;width:47px;height:8px;background:#a86a32"></div>
<div class="a" style="left:889px;top:1036px;width:47px;height:8px;background:#3a4652"></div>
<div class="a" style="left:2170px;top:1036px;width:47px;height:8px;background:#a86a32"></div>
<div class="a" style="left:2760px;top:1036px;width:36px;height:8px;background:#3a4652"></div>
</body></html>
